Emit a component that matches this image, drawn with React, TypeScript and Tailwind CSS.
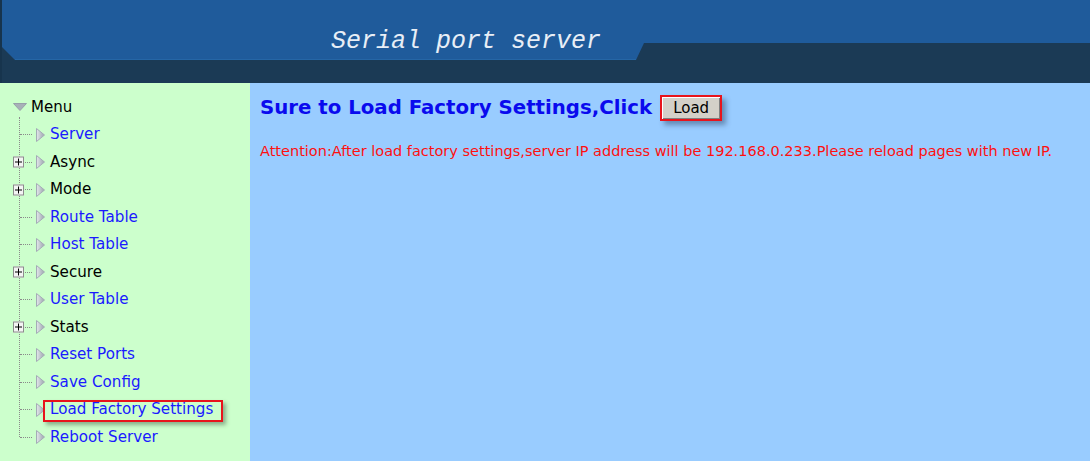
import React from "react";

type MenuItem = {
  readonly label: string;
  readonly link: boolean;
  readonly expandable?: boolean;
  readonly selected?: boolean;
};

const MENU_ITEMS: MenuItem[] = [
  { label: "Server", link: true },
  { label: "Async", link: false, expandable: true },
  { label: "Mode", link: false, expandable: true },
  { label: "Route Table", link: true },
  { label: "Host Table", link: true },
  { label: "Secure", link: false, expandable: true },
  { label: "User Table", link: true },
  { label: "Stats", link: false, expandable: true },
  { label: "Reset Ports", link: true },
  { label: "Save Config", link: true },
  { label: "Load Factory Settings", link: true, selected: true },
  { label: "Reboot Server", link: true },
];

const FONT = "font-['DejaVu_Sans','Verdana',sans-serif]";

function Arrow() {
  return (
    <svg className="shrink-0" height="14" viewBox="0 0 9 14" width="9">
      <defs>
        <linearGradient id="arrowFill" x1="0" x2="1" y1="0" y2="0">
          <stop offset="0" stopColor="#e4e8ec" />
          <stop offset="1" stopColor="#9aa2ac" />
        </linearGradient>
      </defs>
      <path d="M0.5 0.5 L8.5 7 L0.5 13.5 Z" fill="url(#arrowFill)" stroke="#a4acb6" strokeWidth="1" />
    </svg>
  );
}

function DownArrow() {
  return (
    <svg className="shrink-0" height="8" viewBox="0 0 14 8" width="14">
      <path d="M0.5 0.5 L13.5 0.5 L7 7.5 Z" fill="#a8b0b8" stroke="#98a0aa" strokeWidth="1" />
    </svg>
  );
}

function PlusBox() {
  return (
    <span className="absolute left-0 top-1/2 flex h-[11px] w-[11px] -translate-y-1/2 items-center justify-center border border-[#8c8c8c] bg-[#f4f4f4]">
      <span className="absolute h-px w-[7px] bg-black" />
      <span className="absolute h-[7px] w-px bg-black" />
    </span>
  );
}

function Header() {
  return (
    <header className="relative h-[83px] w-full shrink-0 bg-[#1b3a55]">
      <svg className="absolute inset-0" height="83" viewBox="0 0 1090 83" width="1090">
        <rect fill="#17344d" height="83" width="2" x="0" y="0" />
        <polygon fill="#1f5b9b" points="2,0 1090,0 1090,43 644,43 636,60 15,60 2,47" />
        <line stroke="#2566a6" strokeWidth="1" x1="15" x2="636" y1="59.5" y2="59.5" />
      </svg>
      <div className="relative pl-[331px] pt-[29px] font-['Liberation_Mono','Courier_New',monospace] text-[25px] italic leading-none text-[#e8eef6]">
        Serial port server
      </div>
    </header>
  );
}

function Sidebar() {
  return (
    <aside className={`w-[250px] shrink-0 bg-[#ccffcc] pt-[10px] text-[15px] ${FONT}`}>
      <div className="flex h-[28px] items-center gap-[4px] pl-[13px] text-black">
        <DownArrow />
        <span>Menu</span>
      </div>
      <ul className="relative">
        <span className="absolute left-[19px] top-[-4px] bottom-[14px] border-l border-dotted border-[#8a8a8a]" />
        {MENU_ITEMS.map((item) => (
          <li className="relative flex h-[27.5px] items-center pl-[13px]" key={item.label}>
            <span className="relative flex h-full w-[20px] shrink-0 items-center">
              <span className="absolute left-[7px] w-[12px] border-t border-dotted border-[#8a8a8a]" />
              {item.expandable ? <PlusBox /> : null}
            </span>
            <span className="ml-[3px]">
              <Arrow />
            </span>
            <span className={`ml-[5px] whitespace-nowrap text-[15.15px] ${item.link ? "text-[#1a1aff]" : "text-black"}`}>
              {item.label}
            </span>
            {item.selected ? (
              <span className="absolute left-[43px] top-[3.5px] h-[22px] w-[180px] border-2 border-[#e8141c] shadow-[3px_3px_4px_rgba(60,80,60,0.45)]" />
            ) : null}
          </li>
        ))}
      </ul>
    </aside>
  );
}

export default function App() {
  return (
    <div className="flex h-screen w-full flex-col overflow-hidden">
      <Header />
      <div className="flex min-h-0 flex-1">
        <Sidebar />
        <main className={`flex-1 bg-[#99ccff] pl-[10px] pt-[12px] ${FONT}`}>
          <div className="flex h-[26px] items-center">
            <h1 className="text-[19.75px] font-bold leading-none text-[#0a0aee]">Sure to Load Factory Settings,Click</h1>
            <button
              className="ml-[8px] flex h-[26px] w-[62px] items-center justify-center border-2 border-[#e8141c] bg-[#d4d0c8] text-[15px] text-black shadow-[inset_1px_1px_0_#ffffff,inset_-1px_-1px_0_#808080,4px_4px_5px_rgba(40,60,90,0.45)]"
              type="button"
            >
              Load
            </button>
          </div>
          <p className="mt-[21px] whitespace-nowrap text-[14.5px] leading-[18px] text-[#ff1010]">
            Attention:After load factory settings,server IP address will be 192.168.0.233.Please reload pages with new IP.
          </p>
        </main>
      </div>
    </div>
  );
}
